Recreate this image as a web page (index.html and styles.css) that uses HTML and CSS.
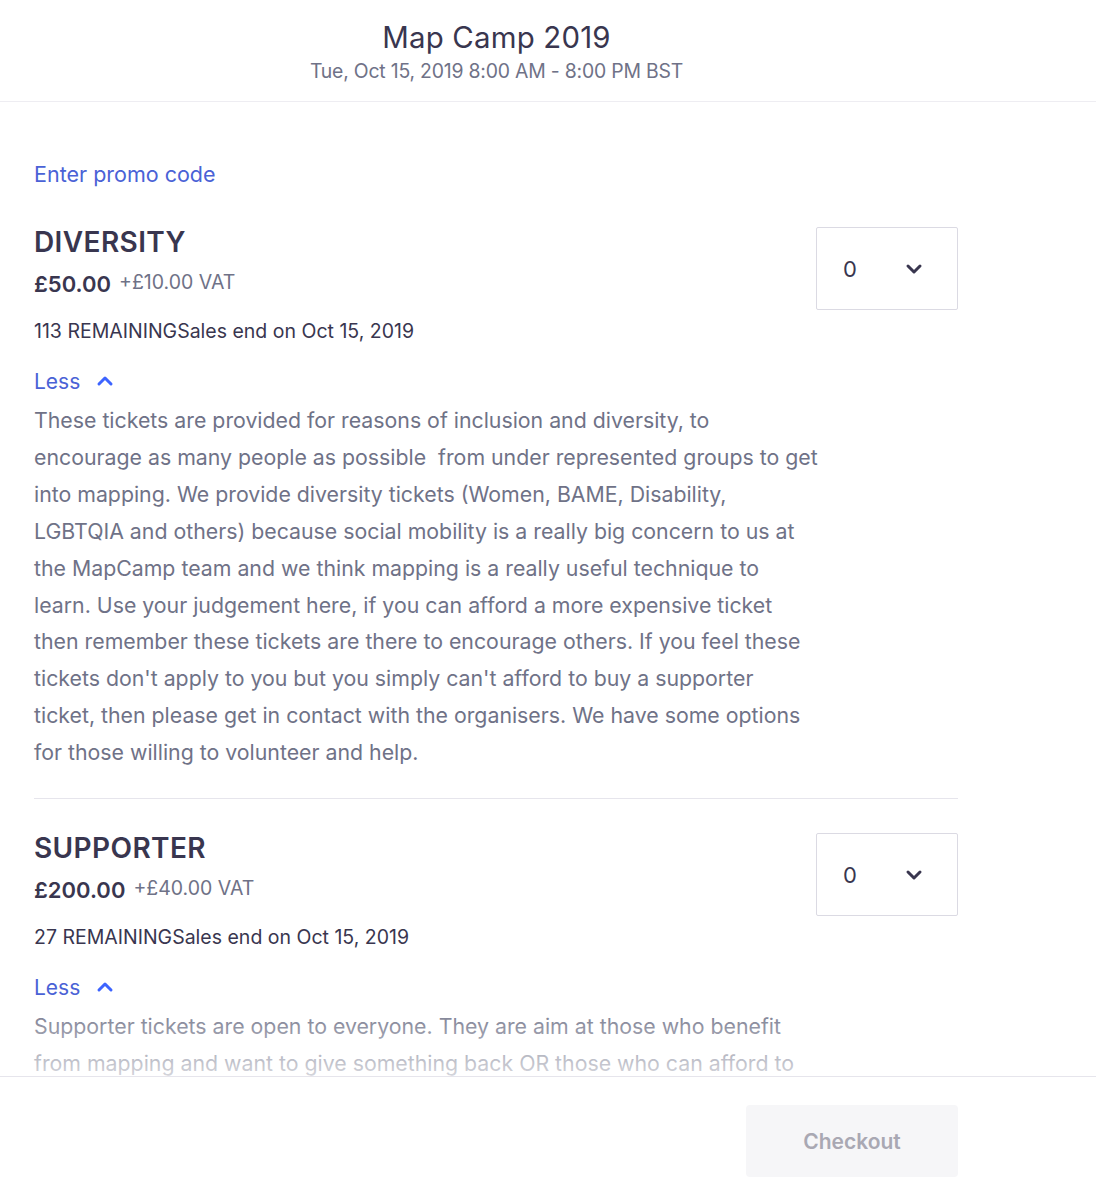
FILE: index.html
```html
<!DOCTYPE html>
<html lang="en">
<head>
<meta charset="utf-8">
<title>Map Camp 2019</title>
<link rel="stylesheet" href="styles.css">
</head>
<body>
<div class="page">
  <header class="header">
    <h1 class="title">Map Camp 2019</h1>
    <div class="date">Tue, Oct 15, 2019 8:00 AM - 8:00 PM BST</div>
  </header>

  <main class="content">
    <a class="promo" href="#">Enter promo code</a>

    <section class="ticket">
      <div class="ticket-head">
        <div class="ticket-info">
          <h2 class="ticket-name">DIVERSITY</h2>
          <div class="price"><span class="amount">£50.00</span><span class="vat">+£10.00 VAT</span></div>
          <div class="meta">113 REMAININGSales end on Oct 15, 2019</div>
        </div>
        <div class="select">
          <span class="qty">0</span>
          <svg class="chev" width="18" height="12" viewBox="0 0 18 12"><path d="M3 3l6 6 6-6" fill="none" stroke="#39364f" stroke-width="3" stroke-linecap="round" stroke-linejoin="round"/></svg>
        </div>
      </div>
      <div class="less">Less
        <svg class="up" width="18" height="12" viewBox="0 0 18 12"><path d="M3 9l6-6 6 6" fill="none" stroke="#3d64ff" stroke-width="3" stroke-linecap="round" stroke-linejoin="round"/></svg>
      </div>
      <p class="desc">These tickets are provided for reasons of inclusion and diversity, to<br>encourage as many people as possible&nbsp; from under represented groups to get<br>into mapping. We provide diversity tickets (Women, BAME, Disability,<br>LGBTQIA and others) because social mobility is a really big concern to us at<br>the MapCamp team and we think mapping is a really useful technique to<br>learn. Use your judgement here, if you can afford a more expensive ticket<br>then remember these tickets are there to encourage others. If you feel these<br>tickets don't apply to you but you simply can't afford to buy a supporter<br>ticket, then please get in contact with the organisers. We have some options<br>for those willing to volunteer and help.</p>
    </section>

    <section class="ticket second">
      <div class="ticket-head">
        <div class="ticket-info">
          <h2 class="ticket-name">SUPPORTER</h2>
          <div class="price"><span class="amount">£200.00</span><span class="vat">+£40.00 VAT</span></div>
          <div class="meta">27 REMAININGSales end on Oct 15, 2019</div>
        </div>
        <div class="select">
          <span class="qty">0</span>
          <svg class="chev" width="18" height="12" viewBox="0 0 18 12"><path d="M3 3l6 6 6-6" fill="none" stroke="#39364f" stroke-width="3" stroke-linecap="round" stroke-linejoin="round"/></svg>
        </div>
      </div>
      <div class="less">Less
        <svg class="up" width="18" height="12" viewBox="0 0 18 12"><path d="M3 9l6-6 6 6" fill="none" stroke="#3d64ff" stroke-width="3" stroke-linecap="round" stroke-linejoin="round"/></svg>
      </div>
      <p class="desc">Supporter tickets are open to everyone. They are aim at those who benefit<br>from mapping and want to give something back OR those who can afford to<br>pay a little more to support the running of the event and help others.</p>
    </section>
  </main>

  <footer class="footer">
    <div class="fade"></div>
    <button class="checkout" type="button">Checkout</button>
  </footer>
</div>
</body>
</html>
```

FILE: styles.css
```css
* { box-sizing: border-box; }
html, body { margin: 0; padding: 0; background: #fff; }
body {
  font-family: Inter, "Noto Sans", "Liberation Sans", sans-serif;
  color: #39364f;
  width: 1096px;
  height: 1200px;
  overflow: hidden;
}
.page {
  position: relative;
  height: 1200px;
  overflow: hidden;
}
.header {
  height: 102px;
  border-bottom: 1px solid #eeedf2;
  display: flex;
  flex-direction: column;
  align-items: center;
  padding: 19px 103px 0 0;
}
.title {
  margin: 0;
  font-size: 29.4px;
  font-weight: 400;
  line-height: 38px;
  color: #39364f;
  letter-spacing: 0.2px;
}
.date {
  font-size: 19.4px;
  line-height: 28px;
  color: #6f7287;
  letter-spacing: -0.2px;
}
.content {
  padding: 56px 0 0 34px;
  width: 958px;
}
.promo {
  display: block;
  font-size: 21.5px;
  color: #4a62d6;
  text-decoration: none;
  line-height: 32px;
}
.ticket { margin-top: 34px; }
.ticket.second {
  border-top: 1px solid #e6e5ec;
  margin-top: 27px;
  padding-top: 31px;
}
.ticket-head {
  display: flex;
  justify-content: space-between;
  align-items: flex-start;
}
.ticket-name {
  margin: 0;
  font-size: 28px;
  font-weight: 600;
  line-height: 36px;
  letter-spacing: 0.4px;
  color: #39364f;
}
.price {
  display: flex;
  align-items: baseline;
  gap: 8px;
  margin-top: 8px;
  line-height: 32px;
}
.amount {
  font-size: 22px;
  font-weight: 600;
  color: #39364f;
}
.vat {
  font-size: 19.5px;
  color: #6f7287;
  position: relative;
  top: -3px;
}
.meta {
  font-size: 19.5px;
  line-height: 28px;
  margin-top: 16px;
  color: #39364f;
}
.select {
  width: 142px;
  height: 83px;
  border: 1px solid #dbdae3;
  border-radius: 2px;
  margin-top: 3px;
  display: flex;
  align-items: center;
  justify-content: space-between;
  padding: 0 34px 0 26px;
}
.qty {
  font-size: 22px;
  color: #39364f;
}
.less {
  margin-top: 21px;
  font-size: 21px;
  line-height: 32px;
  color: #4a62d6;
  display: flex;
  align-items: center;
  gap: 16px;
}
.up { position: relative; top: -1px; }
.desc {
  margin: 4px 0 0;
  font-size: 21.3px;
  line-height: 36.9px;
  color: #6f7287;
  white-space: nowrap;
}
.footer {
  position: absolute;
  left: 0;
  right: 0;
  bottom: 0;
  height: 124px;
  background: #fff;
  border-top: 1px solid #e6e5ec;
  display: flex;
  justify-content: flex-end;
  align-items: flex-start;
  padding: 28px 138px 0 0;
}
.fade {
  position: absolute;
  left: 0;
  right: 0;
  top: -60px;
  height: 59px;
  background: linear-gradient(to bottom, rgba(255,255,255,0.15), rgba(255,255,255,0.7));
  pointer-events: none;
}
.checkout {
  width: 212px;
  height: 72px;
  border: none;
  border-radius: 4px;
  background: #f6f6f8;
  color: #a9a8b3;
  font-family: inherit;
  font-size: 21px;
  font-weight: 600;
}
```
